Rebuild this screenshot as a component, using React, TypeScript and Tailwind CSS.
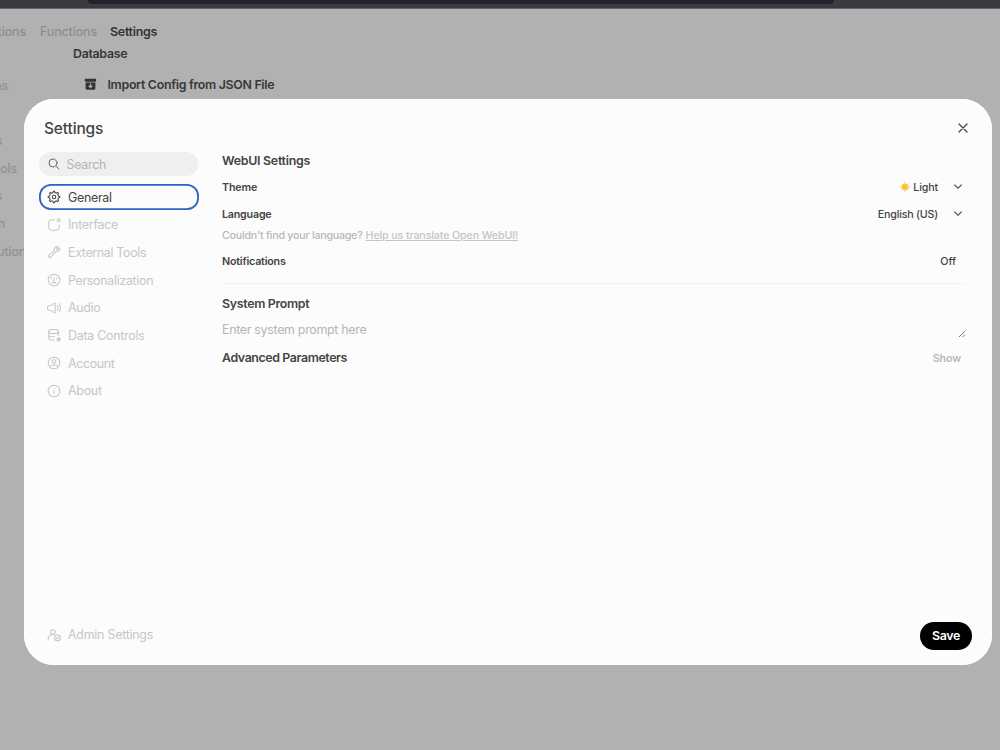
import React from 'react';

type IconProps = { children: React.ReactNode; className?: string };

function Icon({ children, className = 'size-[14px]' }: IconProps) {
  return (
    <svg
      viewBox="0 0 24 24"
      fill="none"
      stroke="currentColor"
      strokeWidth="1.75"
      strokeLinecap="round"
      strokeLinejoin="round"
      className={`shrink-0 ${className}`}
    >
      {children}
    </svg>
  );
}

const items: { label: string; tracking: string; icon: React.ReactNode }[] = [
  {
    label: 'General',
    tracking: 'tracking-[-0.28px]',
    icon: (
      <>
        <circle cx="12" cy="12" r="3" />
        <path d="M19.6224 10.3954L18.5247 7.7448L20 6L18 4L16.2647 5.48295L13.5578 4.36974L12.9353 2H10.981L10.3491 4.40113L7.70441 5.51596L6 4L4 6L5.45337 7.78885L4.3725 10.4463L2 11V13L4.40111 13.6555L5.51575 16.2997L4 18L6 20L7.79116 18.5403L10.397 19.6123L11 22H13L13.6045 19.6132L16.2551 18.5155C16.6969 18.8313 18 20 18 20L20 18L18.5159 16.2494L19.6139 13.598L21.9999 12.9772L22 11L19.6224 10.3954Z" />
      </>
    ),
  },
  {
    label: 'Interface',
    tracking: 'tracking-[-0.25px]',
    icon: (
      <>
        <circle cx="20" cy="4" r="2.5" />
        <path d="M21 11V15C21 18.3137 18.3137 21 15 21H9C5.68629 21 3 18.3137 3 15V9C3 5.68629 5.68629 3 9 3H13" />
      </>
    ),
  },
  {
    label: 'External Tools',
    tracking: 'tracking-[-0.32px]',
    icon: (
      <>
        <path d="M21.75 6.75a4.5 4.5 0 0 1-4.884 4.484c-1.076-.091-2.264.071-2.95.904l-7.152 8.684a2.548 2.548 0 1 1-3.586-3.586l8.684-7.152c.833-.686.995-1.874.904-2.95a4.5 4.5 0 0 1 6.336-4.486l-3.276 3.276a3.004 3.004 0 0 0 2.25 2.25l3.276-3.276c.256.565.398 1.192.398 1.852Z" />
        <path d="M4.867 19.125h.008v.008h-.008v-.008Z" />
      </>
    ),
  },
  {
    label: 'Personalization',
    tracking: 'tracking-[-0.29px]',
    icon: (
      <>
        <circle cx="12" cy="12" r="10" />
        <path d="M7.5 8v2M16.500 8v2M12 8v5.500h-1M8.500 16.500h7" />
      </>
    ),
  },
  {
    label: 'Audio',
    tracking: 'tracking-[-0.3px]',
    icon: (
      <>
        <path d="M1 13.857V10.143C1 9.038 1.895 8.143 3 8.143H5.9C6.096 8.143 6.287 8.085 6.45 7.978L12.45 4.022C13.114 3.584 14 4.061 14 4.857V19.143C14 19.939 13.114 20.416 12.45 19.978L6.45 16.022C6.287 15.915 6.096 15.857 5.9 15.857H3C1.895 15.857 1 14.962 1 13.857Z" />
        <path d="M17.5 7.5S19 9 19 11.5 17.5 15.5 17.5 15.5M20.5 4.5S23 7 23 11.5 20.5 18.5 20.5 18.5" />
      </>
    ),
  },
  {
    label: 'Data Controls',
    tracking: 'tracking-[-0.25px]',
    icon: (
      <>
        <path d="M3 12v5c0 2 2 3.500 4 3.500h6M3 6v6c0 2 2 3 4 3h6M19.500 6v7" />
        <path d="M7 2.500h8.500c2.200 0 4 1.500 4 3.500s-1.800 3.500-4 3.500H7C4.800 9.500 3 8 3 6s1.800-3.500 4-3.500Z" />
        <circle cx="20" cy="19.500" r="2" strokeWidth="3" />
      </>
    ),
  },
  {
    label: 'Account',
    tracking: 'tracking-[-0.35px]',
    icon: (
      <>
        <circle cx="12" cy="12" r="10" />
        <circle cx="12" cy="9.5" r="3" />
        <path d="M4.271 18.346S6.500 15.500 12 15.500s7.729 2.846 7.729 2.846" />
      </>
    ),
  },
  {
    label: 'About',
    tracking: 'tracking-[-0.25px]',
    icon: (
      <>
        <circle cx="12" cy="12" r="10" />
        <path d="M12 11.500v5M12 7.510l.010-.011" />
      </>
    ),
  },
];

function Chevron() {
  return (
    <svg viewBox="0 0 10 10" className="ml-[15px] size-[10px]" fill="none" stroke="#62656f" strokeWidth="1.25" strokeLinecap="round" strokeLinejoin="round">
      <path d="M1.700 3 5 6.300l3.300-3.300" />
    </svg>
  );
}

function Sun() {
  return (
    <svg viewBox="0 0 20 20" className="mr-[3px] size-[10px]">
      <g stroke="#f0b765" strokeWidth="1.800" strokeLinecap="round">
        <path d="M10 1v18M1 10h18M3.500 3.500l13 13M16.500 3.500l-13 13" />
      </g>
      <circle cx="10" cy="10" r="6" fill="#fbc42c" />
    </svg>
  );
}

function Background() {
  return (
    <div className="flex h-[750px] flex-col overflow-hidden bg-[#b1b1b1]">
      <div className="h-[9px] shrink-0 border-b border-[#626265] bg-[#3b3a3f]">
        <div className="ml-[88px] h-1 w-[746px] rounded-b-[5px] bg-[#242329]" />
      </div>
      <div className="flex h-[44px] shrink-0 items-center pt-[2px] text-[12.400px] font-medium tracking-[-0.1px] text-[#8d8d8d]">
        <div className="flex w-[26px] shrink-0 justify-end">Evaluations</div>
        <div className="ml-[14px] w-[56px]">Functions</div>
        <div className="ml-[14px] font-semibold tracking-[-0.25px] text-[#333]">Settings</div>
      </div>
      <div className="-mt-[9px] flex">
        <div className="flex w-[25px] shrink-0 flex-col pt-[27.500px] text-[12.400px] font-medium leading-[27.700px] tracking-[-0.2px] text-[#929292]">
          <div className="flex w-[8px] justify-end">Connections</div>
          <div className="h-[27.700px]" />
          <div className="flex w-[2px] justify-end">Models</div>
          <div className="flex w-[17px] justify-end whitespace-nowrap">External Tools</div>
          <div className="flex w-[2px] justify-end">Documents</div>
          <div className="flex w-[5px] justify-end whitespace-nowrap">Web Search</div>
          <div className="flex w-[26px] justify-end whitespace-nowrap">Code Execution</div>
        </div>
        <div className="ml-[48px] text-[12.400px] font-semibold tracking-[-0.31px] text-[#383838]">
          <div className="leading-[19px]">Database</div>
          <div className="mt-[12px] flex items-center pl-[11px] leading-[19px]">
            <svg viewBox="0 0 16 16" className="mr-[10.500px] size-[13px]" fill="#333">
              <rect x="1" y="1" width="14" height="3.500" rx="1" />
              <path fillRule="evenodd" d="M2 5.500h12V12.500A2 2 0 0 1 12 14.500H4a2 2 0 0 1-2-2zM7.300 6.800v3.400L6 8.900l-1 1 3 3 3-3-1-1-1.300 1.300V6.800z" />
            </svg>
            Import Config from JSON File
          </div>
        </div>
      </div>
    </div>
  );
}

function Modal() {
  return (
    <div className="absolute left-[24px] top-[99px] flex h-[565.500px] w-[968px] flex-col rounded-[30px] bg-[#fcfcfc] text-[#444] shadow-[inset_0_0_0_1px_#ffffff]">
      <div className="flex h-[53px] shrink-0 items-center justify-between pl-[20px] pr-[23px] pt-[5px]">
        <h1 className="pt-px text-[15.500px] font-medium leading-6 tracking-[-0.150px]">Settings</h1>
        <svg viewBox="0 0 12 12" className="size-[12px]" fill="none" stroke="#444" strokeWidth="1.300" strokeLinecap="round">
          <path d="M2 2l8 8M10 2l-8 8" />
        </svg>
      </div>
      <div className="flex min-h-0 flex-1">
        <aside className="ml-[15px] flex w-[159px] shrink-0 flex-col pb-[17px]">
          <div className="flex h-[24px] shrink-0 items-center rounded-full bg-[#efefef] pl-[9px] text-[12.400px] tracking-[-0.25px] text-[#b5b5b5]">
            <svg viewBox="0 0 12 12" className="mr-[6.500px] size-[12px]" fill="none" stroke="#666" strokeWidth="1" strokeLinecap="round">
              <circle cx="5" cy="5" r="4" />
              <path d="M8 8l3 3" />
            </svg>
            <span className="pt-[2px]">Search</span>
          </div>
          <nav className="mt-[7px] flex flex-col text-[12.400px]">
            {items.map((it, i) => (
              <div key={it.label} className="flex h-[27.700px] items-center">
                <div
                  className={
                    i === 0
                      ? 'flex h-[26px] w-[160px] shrink-0 items-center rounded-[12px] pl-[8px] text-[#444] shadow-[inset_0_0_0_1.800px_#2e62c0]'
                      : 'flex h-[26px] items-center pl-[8px] text-[#c6c6c6]'
                  }
                >
                  <Icon>{it.icon}</Icon>
                  <span className={`ml-[7px] pt-[2px] ${it.tracking}`}>{it.label}</span>
                </div>
              </div>
            ))}
          </nav>
          <div className="mt-auto flex h-[26px] items-center pl-[8px] text-[12.400px] tracking-[-0.23px] text-[#c6c6c6]">
            <Icon>
              <circle cx="10" cy="7" r="4" />
              <path d="M2 20v-1c0-4.400 3.600-8 8-8 1.500 0 2.500.3 3.500.8" />
              <circle cx="18" cy="17" r="5" />
              <path d="M16 17l1.500 1.500L20 16" />
            </Icon>
            <span className="ml-[7px] pt-[2px]">Admin Settings</span>
          </div>
        </aside>
        <main className="ml-[24px] mr-[20px] flex flex-1 flex-col text-[10.700px] font-medium">
          <h2 className="text-[12.400px] font-semibold leading-[18px] tracking-[-0.280px]">WebUI Settings</h2>
          <div className="mt-[3px] flex h-[28px] items-center justify-between">
            <span className="pt-[2px] font-semibold tracking-[-0.150px]">Theme</span>
            <div className="mr-[9px] flex items-center font-medium">
              <Sun />
              <span className="pt-[2px] tracking-[-0.150px]">Light</span>
              <Chevron />
            </div>
          </div>
          <div className="flex h-[27px] items-center justify-between">
            <span className="pt-[2px] font-semibold tracking-[-0.200px]">Language</span>
            <div className="mr-[9px] flex items-center font-medium">
              <span className="pt-[2px] tracking-[-0.200px]">English (US)</span>
              <Chevron />
            </div>
          </div>
          <div className="flex h-[15px] items-center pt-[2px] text-[#b8b8b8]">
            <span className="tracking-[-0.250px]">Couldn't find your language?</span>
            <span className="ml-[3px] tracking-[-0.130px] text-[#c4c4c4] underline">Help us translate Open WebUI!</span>
          </div>
          <div className="mt-[5px] flex h-[27px] items-center justify-between pt-[2px]">
            <span className="font-semibold tracking-[-0.200px]">Notifications</span>
            <span className="mr-[16px] font-medium tracking-[-0.050px]">Off</span>
          </div>
          <div className="mr-[6px] mt-[8px] h-px shrink-0 bg-[#f3f3f3]" />
          <h2 className="mt-[11px] text-[12.400px] font-semibold leading-[18px] tracking-[-0.320px]">System Prompt</h2>
          <div className="mt-[7px] flex h-[27px] justify-between text-[12.400px] font-normal leading-[20px] tracking-[-0.290px] text-[#b5b5b5]">
            <span>Enter system prompt here</span>
            <svg viewBox="0 0 8 8" className="mr-[6px] mt-[10px] size-[8px]" fill="none" stroke="#666" strokeWidth="0.900">
              <path d="M1 7l6-6M4.500 7l2.500-2.500" />
            </svg>
          </div>
          <div className="flex h-[23px] items-center justify-between">
            <h2 className="text-[12.400px] font-semibold tracking-[-0.400px]">Advanced Parameters</h2>
            <span className="mr-[11px] pt-px font-semibold tracking-[-0.150px] text-[#b8b8b8]">Show</span>
          </div>
          <button className="mb-[14.500px] mt-auto h-[28px] w-[52px] self-end rounded-full bg-black text-[12.400px] font-semibold tracking-[-0.300px] text-white">Save</button>
        </main>
      </div>
    </div>
  );
}

export default function App() {
  return (
    <div className="relative h-[750px] w-[1000px] overflow-hidden font-[Inter,sans-serif]">
      <Background />
      <Modal />
    </div>
  );
}
